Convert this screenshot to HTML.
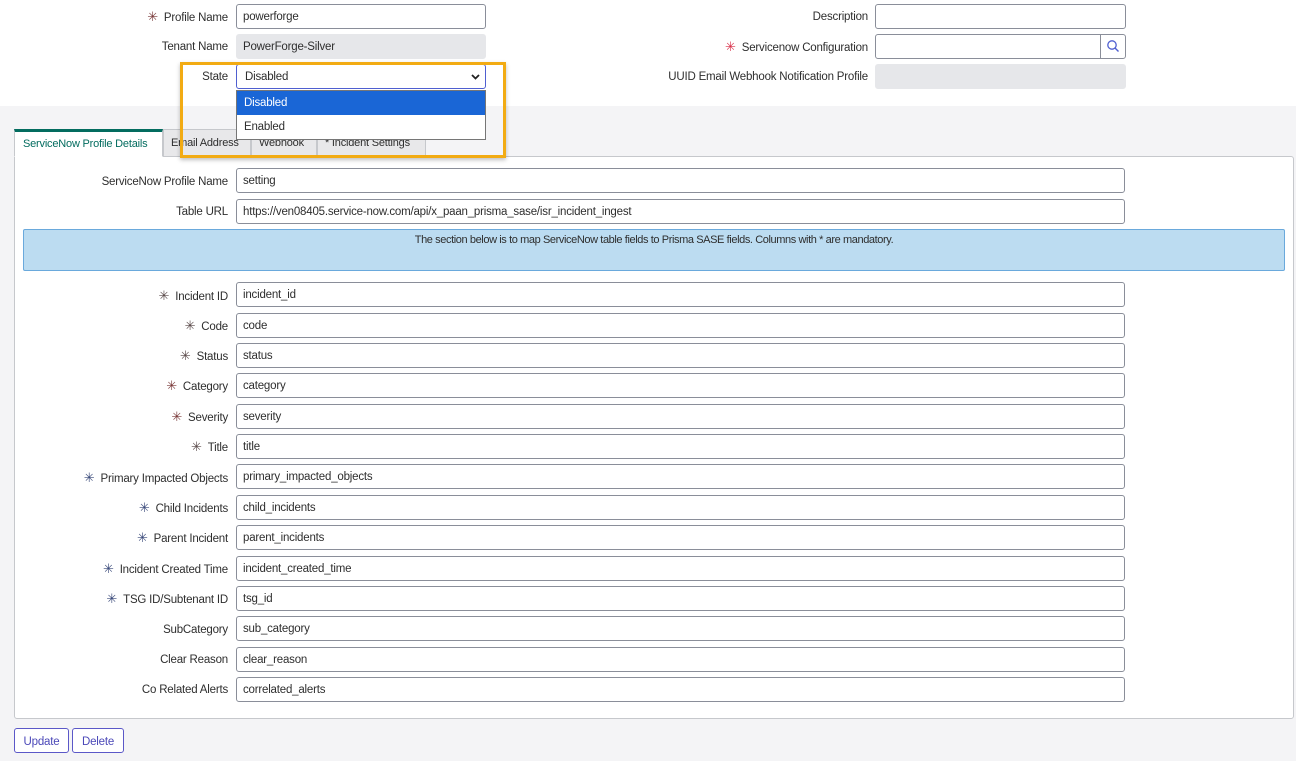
<!DOCTYPE html>
<html><head><style>
*{box-sizing:border-box;margin:0;padding:0}
body{width:1296px;height:761px;position:relative;background:#f4f4f6;font-family:"Liberation Sans",sans-serif;font-size:11.5px;letter-spacing:-0.2px;color:#2e2e2e;overflow:hidden}
.top{position:absolute;left:0;top:0;width:1296px;height:106px;background:#fff}
.lbl{position:absolute;text-align:right;white-space:nowrap;line-height:14px}
.inp{position:absolute;background:#fff;border:1px solid #8a8e99;border-radius:3px;padding-left:6px;height:25px;white-space:nowrap;overflow:hidden;display:flex;align-items:center}
.ro{background:#e6e7ea;border-color:#e6e7ea}
.ast{color:#5a4a4a;margin-right:6px;font-size:13px}
.panel{position:absolute;left:14px;top:156px;width:1280px;height:563px;background:#fff;border:1px solid #c6c8cc;border-radius:0 3px 3px 3px}
.tab{position:absolute;top:129px;height:28px;background:#e8e8ea;border:1px solid #c6c8cc;line-height:26px;padding:0 7px;color:#2e2e2e;white-space:nowrap;overflow:hidden;font-size:11px}
.btn{position:absolute;top:728px;height:25px;border:1px solid #5b58c8;border-radius:3px;background:#fff;color:#4b48b8;display:flex;align-items:center;justify-content:center;padding-top:2px}
</style></head><body>
<div class="top"></div>

<div class="lbl" style="right:1068px;top:10px"><span class="ast" style="color:#7a3a3a">✳</span>Profile Name</div>
<div class="inp" style="left:236px;top:4px;width:250px">powerforge</div>
<div class="lbl" style="right:1068px;top:40px">Tenant Name</div>
<div class="inp ro" style="left:236px;top:34px;width:250px">PowerForge-Silver</div>
<div class="lbl" style="right:1068px;top:70px">State</div>
<div class="inp" style="left:236px;top:64px;width:250px;border:1px solid #4f5fd0;padding-left:8px">Disabled<svg style="position:absolute;right:5px;top:9px" width="9" height="6" viewBox="0 0 9 6"><path d="M1 1L4.5 4.5L8 1" fill="none" stroke="#222" stroke-width="1.8"/></svg></div>

<div class="lbl" style="right:428px;top:10px">Description</div>
<div class="inp" style="left:875px;top:4px;width:251px"></div>
<div class="lbl" style="right:428px;top:40px"><span class="ast" style="color:#d9304a">✳</span>Servicenow Configuration</div>
<div class="inp" style="left:875px;top:34px;width:251px"></div>
<div style="position:absolute;left:1100px;top:34px;width:1px;height:25px;background:#8a8e99"></div>
<svg style="position:absolute;left:1106px;top:39px" width="14" height="14" viewBox="0 0 14 14"><circle cx="6" cy="6" r="4.2" fill="none" stroke="#4f5fd0" stroke-width="1.3"/><path d="M9 9L12.5 12.5" stroke="#4f5fd0" stroke-width="1.4"/></svg>
<div class="lbl" style="right:428px;top:70px">UUID Email Webhook Notification Profile</div>
<div class="inp ro" style="left:875px;top:64px;width:251px"></div>

<div class="panel"></div>
<div class="tab" style="left:14px;width:149px;background:#fff;border-bottom-color:#fff;border-top:3px solid #036c5f;color:#036c5f;line-height:24px;padding:0 8px">ServiceNow Profile Details</div>
<div class="tab" style="left:163px;width:88px">Email Address</div>
<div class="tab" style="left:251px;width:66px">Webhook</div>
<div class="tab" style="left:317px;width:109px">* Incident Settings</div>

<div style="position:absolute;left:236px;top:90px;width:250px;height:50px;background:#fff;border:1px solid #767676"></div>
<div style="position:absolute;left:237px;top:91px;width:248px;height:24px;background:#1a66d6;color:#fff;line-height:24px;padding-left:7px">Disabled</div>
<div style="position:absolute;left:237px;top:115px;width:248px;height:24px;line-height:24px;padding-left:7px">Enabled</div>
<div style="position:absolute;left:180px;top:62px;width:326px;height:96px;border:3px solid #f2ab13;box-shadow:0 2px 4px rgba(0,0,0,.25)"></div>

<div class="lbl" style="right:1068px;top:175px">ServiceNow Profile Name</div>
<div class="inp" style="left:236px;top:168px;width:889px">setting</div>
<div class="lbl" style="right:1068px;top:205px">Table URL</div>
<div class="inp" style="left:236px;top:199px;width:889px">https://ven08405.service-now.com/api/x_paan_prisma_sase/isr_incident_ingest</div>

<div style="position:absolute;left:23px;top:229px;width:1262px;height:42px;background:#bcdcf1;border:1px solid #6aa9dc;border-radius:2px;text-align:center;padding-top:4px;font-size:11px;letter-spacing:-0.4px">The section below is to map ServiceNow table fields to Prisma SASE fields. Columns with * are mandatory.</div>

<div class="lbl" style="right:1068px;top:289px"><span class="ast">✳</span>Incident ID</div><div class="inp" style="left:236px;top:282px;width:889px">incident_id</div>
<div class="lbl" style="right:1068px;top:319px"><span class="ast">✳</span>Code</div><div class="inp" style="left:236px;top:313px;width:889px">code</div>
<div class="lbl" style="right:1068px;top:349px"><span class="ast">✳</span>Status</div><div class="inp" style="left:236px;top:343px;width:889px">status</div>
<div class="lbl" style="right:1068px;top:379px"><span class="ast" style="color:#7a3a3a">✳</span>Category</div><div class="inp" style="left:236px;top:373px;width:889px">category</div>
<div class="lbl" style="right:1068px;top:410px"><span class="ast" style="color:#7a3a3a">✳</span>Severity</div><div class="inp" style="left:236px;top:404px;width:889px">severity</div>
<div class="lbl" style="right:1068px;top:440px"><span class="ast">✳</span>Title</div><div class="inp" style="left:236px;top:434px;width:889px">title</div>
<div class="lbl" style="right:1068px;top:471px"><span class="ast" style="color:#3a4a7a">✳</span>Primary Impacted Objects</div><div class="inp" style="left:236px;top:464px;width:889px">primary_impacted_objects</div>
<div class="lbl" style="right:1068px;top:501px"><span class="ast" style="color:#3a4a7a">✳</span>Child Incidents</div><div class="inp" style="left:236px;top:495px;width:889px">child_incidents</div>
<div class="lbl" style="right:1068px;top:531px"><span class="ast" style="color:#3a4a7a">✳</span>Parent Incident</div><div class="inp" style="left:236px;top:525px;width:889px">parent_incidents</div>
<div class="lbl" style="right:1068px;top:562px"><span class="ast" style="color:#3a4a7a">✳</span>Incident Created Time</div><div class="inp" style="left:236px;top:556px;width:889px">incident_created_time</div>
<div class="lbl" style="right:1068px;top:592px"><span class="ast" style="color:#3a4a7a">✳</span>TSG ID/Subtenant ID</div><div class="inp" style="left:236px;top:586px;width:889px">tsg_id</div>
<div class="lbl" style="right:1068px;top:623px">SubCategory</div><div class="inp" style="left:236px;top:616px;width:889px">sub_category</div>
<div class="lbl" style="right:1068px;top:653px">Clear Reason</div><div class="inp" style="left:236px;top:647px;width:889px">clear_reason</div>
<div class="lbl" style="right:1068px;top:683px">Co Related Alerts</div><div class="inp" style="left:236px;top:677px;width:889px">correlated_alerts</div>

<div class="btn" style="left:14px;width:55px">Update</div>
<div class="btn" style="left:72px;width:52px">Delete</div>
</body></html>
